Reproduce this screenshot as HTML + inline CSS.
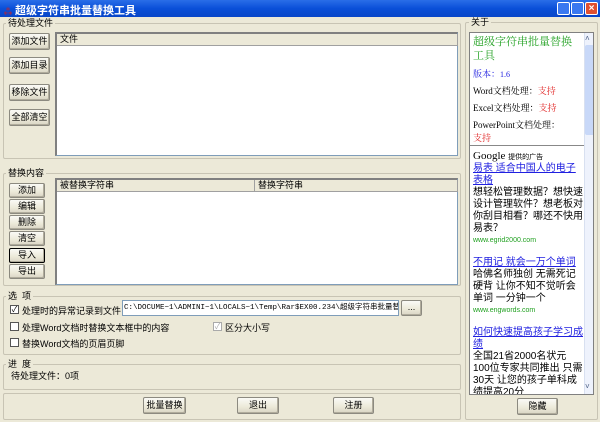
<!DOCTYPE html>
<html><head><meta charset="utf-8"><style>
*{margin:0;padding:0;box-sizing:border-box}
body{width:600px;height:422px;overflow:hidden;background:#ece9d8;font-family:"Liberation Sans","Noto Sans CJK SC",sans-serif;font-size:9px;color:#000;position:relative}
.a{position:absolute}
.tb{left:0;top:0;width:600px;height:17px;background:linear-gradient(#2a6ee8,#0a4fd8 50%,#0846c8);}
.grp{position:absolute;border:1px solid #c8c4b4;border-radius:2px}
.lg{position:absolute;background:#ece9d8;padding:0 2px;font-size:9px;line-height:10px}
.btn{position:absolute;background:linear-gradient(#fafaf6,#ece9d8 60%,#d8d4c4);border:1px solid #8c8a80;border-radius:2px;font-size:9px;text-align:center;box-shadow:inset -1px -1px 0 #b0ac9c}
.list{position:absolute;background:#fff;border:1px solid #7f9db9;border-top:2px solid #808080;border-left:2px solid #808080}
.hd{position:absolute;top:0;height:12px;background:#ece9d8;border-right:1px solid #a0a0a0;border-bottom:1px solid #a0a0a0;font-size:9px;line-height:11px;padding-left:3px}
.cb{position:absolute;width:9px;height:9px;border:1px solid #555;background:#fff;font-size:8px;line-height:8px;text-align:center}
.t{position:absolute;font-size:9px;white-space:nowrap}
</style></head><body>
<div class="a tb"></div>
<div class="t" style="left:3px;top:3px;color:#d02020;font-size:10px">⁂</div>
<div class="t" style="left:15px;top:2px;color:#fff;font-weight:bold;font-size:11px;font-family:'Liberation Sans','Noto Sans CJK SC',sans-serif">超级字符串批量替换工具</div>
<div class="a" style="left:557px;top:2px;width:13px;height:13px;background:#3a78f0;border:1px solid #fff;border-radius:2px"></div>
<div class="a" style="left:571px;top:2px;width:13px;height:13px;background:#3a78f0;border:1px solid #fff;border-radius:2px"></div>
<div class="a" style="left:585px;top:2px;width:13px;height:13px;background:#e05030;border:1px solid #fff;border-radius:2px;color:#fff;font-size:10px;line-height:11px;text-align:center;font-weight:bold">×</div>

<div class="grp" style="left:3px;top:23px;width:458px;height:136px"></div>
<div class="lg" style="left:6px;top:18px">待处理文件</div>
<div class="btn" style="left:9px;top:33px;width:41px;height:17px;line-height:15px">添加文件</div>
<div class="btn" style="left:9px;top:57px;width:41px;height:17px;line-height:15px">添加目录</div>
<div class="btn" style="left:9px;top:84px;width:41px;height:17px;line-height:15px">移除文件</div>
<div class="btn" style="left:9px;top:109px;width:41px;height:17px;line-height:15px">全部清空</div>
<div class="list" style="left:55px;top:32px;width:403px;height:124px"><div class="hd" style="left:0;width:401px">文件</div></div>

<div class="grp" style="left:3px;top:173px;width:458px;height:113px"></div>
<div class="lg" style="left:6px;top:168px">替换内容</div>
<div class="btn" style="left:9px;top:183px;width:36px;height:15px;line-height:13px">添加</div>
<div class="btn" style="left:9px;top:199px;width:36px;height:15px;line-height:13px">编辑</div>
<div class="btn" style="left:9px;top:215px;width:36px;height:15px;line-height:13px">删除</div>
<div class="btn" style="left:9px;top:231px;width:36px;height:15px;line-height:13px">清空</div>
<div class="btn" style="left:9px;top:248px;width:36px;height:15px;line-height:13px;border:1px solid #000">导入</div>
<div class="btn" style="left:9px;top:264px;width:36px;height:15px;line-height:13px">导出</div>
<div class="list" style="left:55px;top:178px;width:403px;height:107px"><div class="hd" style="left:0;width:198px">被替换字符串</div><div class="hd" style="left:198px;width:203px">替换字符串</div></div>

<div class="grp" style="left:3px;top:296px;width:458px;height:59px"></div>
<div class="lg" style="left:6px;top:291px">选&nbsp;&nbsp;项</div>
<div class="cb" style="left:10px;top:305px">✓</div>
<div class="t" style="left:22px;top:304px">处理时的异常记录到文件：</div>
<div class="a" style="left:122px;top:300px;width:277px;height:16px;background:#fff;border:1px solid #7f9db9;font-family:'Liberation Mono','Noto Sans CJK SC',monospace;font-size:7.5px;line-height:14px;white-space:nowrap;overflow:hidden;padding-left:1px">C:\DOCUME~1\ADMINI~1\LOCALS~1\Temp\Rar$EX00.234\超级字符串批量替换工具_1.6\</div>
<div class="btn" style="left:401px;top:300px;width:21px;height:16px;line-height:13px">...</div>
<div class="cb" style="left:10px;top:322px"></div>
<div class="t" style="left:22px;top:321px">处理Word文档时替换文本框中的内容</div>
<div class="cb" style="left:213px;top:322px;border-color:#aaa;color:#aaa">✓</div>
<div class="t" style="left:225px;top:321px">区分大小写</div>
<div class="cb" style="left:10px;top:338px"></div>
<div class="t" style="left:22px;top:337px">替换Word文档的页眉页脚</div>

<div class="grp" style="left:3px;top:364px;width:458px;height:26px"></div>
<div class="lg" style="left:6px;top:359px">进&nbsp;&nbsp;度</div>
<div class="t" style="left:11px;top:369px">待处理文件：0项</div>

<div class="grp" style="left:3px;top:393px;width:458px;height:27px"></div>
<div class="btn" style="left:143px;top:397px;width:43px;height:17px;line-height:15px">批量替换</div>
<div class="btn" style="left:237px;top:397px;width:42px;height:17px;line-height:15px">退出</div>
<div class="btn" style="left:333px;top:397px;width:41px;height:17px;line-height:15px">注册</div>

<div class="grp" style="left:465px;top:22px;width:133px;height:398px"></div>
<div class="lg" style="left:469px;top:17px">关于</div>
<div class="a" style="left:469px;top:32px;width:125px;height:363px;background:#fff;border:1px solid #808080;overflow:hidden">
 <div class="a" style="left:114px;top:0;width:10px;height:361px;background:#eef2fc;border-left:1px solid #d8e0f0"></div>
 <div class="a" style="left:115px;top:12px;width:9px;height:90px;background:#c8d8f8;border-radius:2px"></div>
 <div class="t" style="left:115px;top:1px;color:#4d6185;font-size:8px">˄</div>
 <div class="t" style="left:115px;top:349px;color:#4d6185;font-size:8px">˅</div>
 <div class="a" style="left:3px;top:2px;width:102px;font-size:11px;line-height:14px;color:#20a020;font-family:'Liberation Serif','Noto Serif CJK SC',serif">超级字符串批量替换工具</div>
 <div class="t" style="left:3px;top:34px;color:#2020e0;font-family:'Liberation Serif','Noto Serif CJK SC',serif;font-size:9px">版本：<span style="font-size:8px">1.6</span></div>
 <div class="t" style="left:3px;top:51px;font-family:'Liberation Serif','Noto Serif CJK SC',serif">Word文档处理：<span style="color:#e02020">支持</span></div>
 <div class="t" style="left:3px;top:68px;font-family:'Liberation Serif','Noto Serif CJK SC',serif">Excel文档处理：<span style="color:#e02020">支持</span></div>
 <div class="t" style="left:3px;top:85px;font-family:'Liberation Serif','Noto Serif CJK SC',serif">PowerPoint文档处理：<br><span style="color:#e02020">支持</span></div>
 <div class="a" style="left:0;top:112px;width:114px;height:1px;background:#888"></div>
 <div class="t" style="left:3px;top:117px;font-family:'Liberation Serif',serif;font-size:11px">Google <span style="font-size:7px;font-family:'Liberation Sans','Noto Sans CJK SC',sans-serif">提供的广告</span></div>
 <div class="a" style="left:3px;top:130px;width:110px;font-size:10px;line-height:12px">
  <div style="color:#2020e0;text-decoration:underline">易表 适合中国人的电子表格</div>
  <div>想轻松管理数据？想快速设计管理软件？想老板对你刮目相看？哪还不快用易表？</div>
  <div style="color:#20a020;font-size:7px">www.egrid2000.com</div>
  <div style="height:10px"></div>
  <div style="color:#2020e0;text-decoration:underline">不用记 就会一万个单词</div>
  <div>哈佛名师独创 无需死记硬背 让你不知不觉听会单词 一分钟一个</div>
  <div style="color:#20a020;font-size:7px">www.engwords.com</div>
  <div style="height:10px"></div>
  <div style="color:#2020e0;text-decoration:underline">如何快速提高孩子学习成绩</div>
  <div>全国21省2000名状元100位专家共同推出 只需30天 让您的孩子单科成绩提高20分</div>
  <div style="color:#20a020;font-size:7px">www.gfgnjy.com</div>
 </div>
</div>
<div class="btn" style="left:517px;top:398px;width:41px;height:17px;line-height:15px">隐藏</div>
</body></html>
